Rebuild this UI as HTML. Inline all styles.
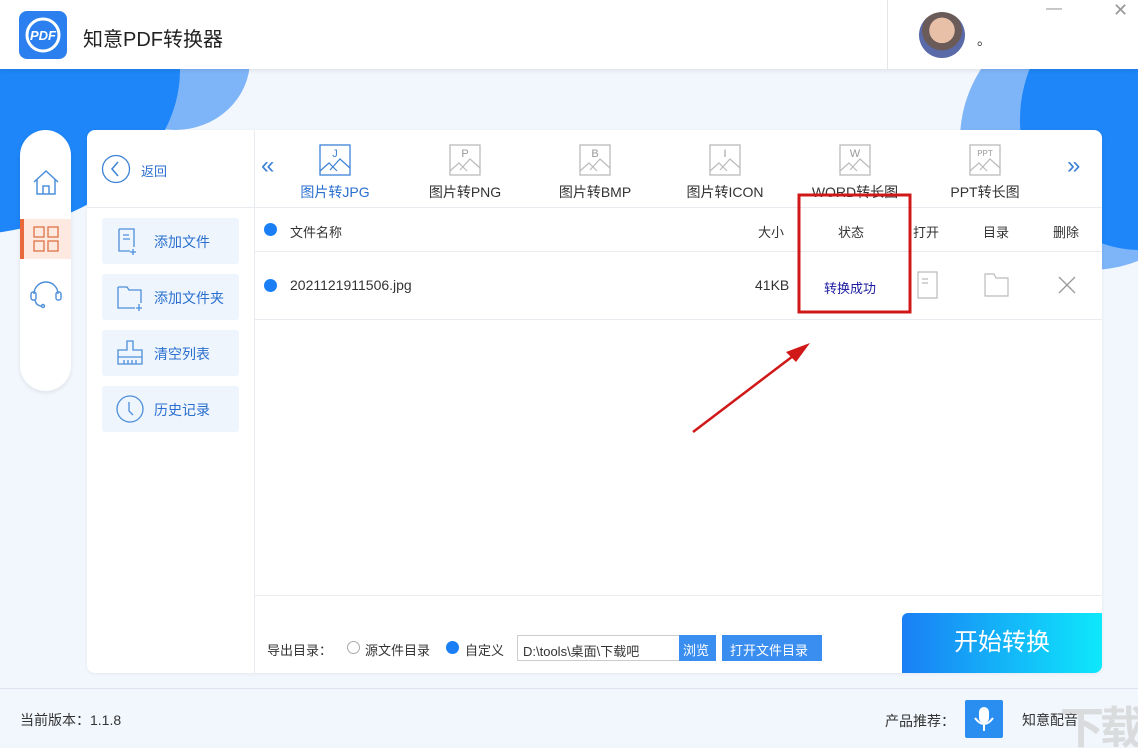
<!DOCTYPE html>
<html><head><meta charset="utf-8"><style>
*{margin:0;padding:0;box-sizing:border-box}
html,body{width:1138px;height:748px;overflow:hidden}
body{background:#f2f7fd;font-family:"Liberation Sans","Noto Sans CJK SC",sans-serif;position:relative;color:#333}
.abs{position:absolute}
.top{left:0;top:0;width:1138px;height:69px;background:#fff;box-shadow:0 2px 4px rgba(0,0,0,.08);z-index:3}
.panel{left:87px;top:130px;width:1015px;height:543px;background:#fff;border-radius:8px;box-shadow:0 1px 4px rgba(0,0,0,.06)}
.side{left:20px;top:130px;width:51px;height:261px;background:#fff;border-radius:26px;box-shadow:0 2px 5px rgba(0,0,0,.08)}
.btn{left:15px;width:137px;height:46px;background:#eef5fd;border-radius:3px;font-size:14px;color:#2a6fcf}
.btn span{position:absolute;left:52px;top:14px}
.btn svg{position:absolute;left:14px;top:9px}
.tab{top:14px;width:120px;text-align:center;font-size:14px;color:#333}
.tab svg{display:block;margin:0 auto 6px}
.hd{font-size:13px;color:#333;top:92px}
.row{font-size:14px;top:147px}
.bg{left:0;top:0;width:1138px;height:300px;overflow:hidden}
.el{position:absolute;border-radius:50%}
</style></head><body>
<div class="abs bg">
 <div class="el" style="left:100px;top:-10px;width:150px;height:140px;background:#7eb5f8"></div>
 <div class="el" style="left:-260px;top:-95px;width:440px;height:330px;background:#1e86f8"></div>
 <div class="el" style="left:960px;top:10px;width:260px;height:260px;background:#7eb5f8"></div>
 <div class="el" style="left:1020px;top:-10px;width:240px;height:260px;background:#1e86f8"></div>
</div>
<div class="abs top">
 <svg class="abs" style="left:19px;top:11px" width="48" height="48"><rect width="48" height="48" rx="8" fill="#2b7fee"/><circle cx="24" cy="24" r="16" fill="none" stroke="#fff" stroke-width="3"/><text x="24" y="29" font-size="13" font-weight="bold" font-style="italic" fill="#fff" text-anchor="middle" font-family="Liberation Sans">PDF</text></svg>
 <div class="abs" style="left:83px;top:23px;font-size:20px;color:#222">知意PDF转换器</div>
 <div class="abs" style="left:887px;top:0;width:1px;height:69px;background:#e5e5e5"></div>
 <div class="abs" style="left:919px;top:12px;width:46px;height:46px;border-radius:50%;background:radial-gradient(circle at 50% 40%,#e8c0a8 0 35%,#6a5a58 36% 55%,#5a6aa8 56%)"></div>
 <div class="abs" style="left:977px;top:30px;font-size:14px">。</div>
 <div class="abs" style="left:1046px;top:0;font-size:16px;color:#999">—</div>
 <div class="abs" style="left:1113px;top:0;font-size:18px;color:#999">✕</div>
</div>
<div class="abs side">
 <svg class="abs" style="left:12px;top:38px" width="28" height="28"><path d="M2 14 L14 3 L26 14 M5 11 V26 H23 V11 M11 26 V18 H17 V26" fill="none" stroke="#4d8fdb" stroke-width="1.5"/></svg>
 <div class="abs" style="left:0;top:89px;width:51px;height:40px;background:#fde9e0;border-left:4px solid #e8693c"></div>
 <svg class="abs" style="left:13px;top:96px" width="26" height="26"><g fill="none" stroke="#e07a50" stroke-width="1.4"><rect x="1" y="1" width="10" height="10"/><rect x="15" y="1" width="10" height="10"/><rect x="1" y="15" width="10" height="10"/><rect x="15" y="15" width="10" height="10"/></g></svg>
 <svg class="abs" style="left:10px;top:148px" width="32" height="32"><g fill="none" stroke="#4d8fdb" stroke-width="1.4"><path d="M4 16 A12 12 0 0 1 28 16"/><rect x="1" y="14" width="5" height="8" rx="2"/><rect x="26" y="14" width="5" height="8" rx="2"/><path d="M5 22 Q6 28 12 28"/><circle cx="13" cy="28" r="1.5"/></g></svg>
</div>
<div class="abs panel">
 <div class="abs" style="left:167px;top:0;width:1px;height:543px;background:#e8ecf0"></div>
 <div class="abs" style="left:0;top:77px;width:1015px;height:1px;background:#e8ecf0"></div>
 <svg class="abs" style="left:14px;top:24px" width="30" height="30"><circle cx="15" cy="15" r="13.5" fill="none" stroke="#3d82d6" stroke-width="1.3"/><path d="M17 8 L11 15 L17 22" fill="none" stroke="#3d82d6" stroke-width="1.5"/></svg>
 <div class="abs" style="left:54px;top:31px;font-size:13px;color:#2a6fcf">返回</div>
 <div class="abs btn" style="top:88px"><svg width="26" height="28"><path d="M3 2 H18 V20 M3 2 V24 H14 M7 8 H13 M7 12 H14 M17 22 V28 M14 25 H20" fill="none" stroke="#4d8fdb" stroke-width="1.3"/></svg><span>添加文件</span></div>
 <div class="abs btn" style="top:144px"><svg width="30" height="28"><path d="M2 4 H11 L13 7 H25 V20 M2 4 V25 H19 M23 21 V28 M20 25 H26" fill="none" stroke="#4d8fdb" stroke-width="1.3"/></svg><span>添加文件夹</span></div>
 <div class="abs btn" style="top:200px"><svg width="30" height="28"><path d="M11 2 H17 V11 H26 V25 H2 V11 H11 Z M2 18 H26 M8 21 V25 M12 21 V25 M16 21 V25 M20 21 V25" fill="none" stroke="#4d8fdb" stroke-width="1.3"/></svg><span>清空列表</span></div>
 <div class="abs btn" style="top:256px"><svg width="30" height="30"><circle cx="14" cy="14" r="13" fill="none" stroke="#4d8fdb" stroke-width="1.3"/><path d="M13 7 V16 L17 20" fill="none" stroke="#4d8fdb" stroke-width="1.3"/></svg><span>历史记录</span></div>
 <div class="abs" style="left:174px;top:22px;font-size:24px;color:#3d82d6">«</div>
 <div class="abs" style="left:980px;top:22px;font-size:24px;color:#3d82d6">»</div>
 <div class="abs tab" style="left:188px;color:#2a6fcf"><svg width="32" height="32"><rect x="1" y="1" width="30" height="30" fill="none" stroke="#3d82d6" stroke-width="1.3"/><path d="M1 27 L10 19 L18 27 M11 26 L21 15 L31 24" fill="none" stroke="#3d82d6" stroke-width="1.2"/><text x="16" y="13" font-size="11" fill="#3d82d6" text-anchor="middle">J</text></svg>图片转JPG</div>
 <div class="abs tab" style="left:318px"><svg width="32" height="32"><rect x="1" y="1" width="30" height="30" fill="none" stroke="#bbb" stroke-width="1.3"/><path d="M1 27 L10 19 L18 27 M11 26 L21 15 L31 24" fill="none" stroke="#bbb" stroke-width="1.2"/><text x="16" y="13" font-size="11" fill="#999" text-anchor="middle">P</text></svg>图片转PNG</div>
 <div class="abs tab" style="left:448px"><svg width="32" height="32"><rect x="1" y="1" width="30" height="30" fill="none" stroke="#bbb" stroke-width="1.3"/><path d="M1 27 L10 19 L18 27 M11 26 L21 15 L31 24" fill="none" stroke="#bbb" stroke-width="1.2"/><text x="16" y="13" font-size="11" fill="#999" text-anchor="middle">B</text></svg>图片转BMP</div>
 <div class="abs tab" style="left:578px"><svg width="32" height="32"><rect x="1" y="1" width="30" height="30" fill="none" stroke="#bbb" stroke-width="1.3"/><path d="M1 27 L10 19 L18 27 M11 26 L21 15 L31 24" fill="none" stroke="#bbb" stroke-width="1.2"/><text x="16" y="13" font-size="11" fill="#999" text-anchor="middle">I</text></svg>图片转ICON</div>
 <div class="abs tab" style="left:708px"><svg width="32" height="32"><rect x="1" y="1" width="30" height="30" fill="none" stroke="#bbb" stroke-width="1.3"/><path d="M1 27 L10 19 L18 27 M11 26 L21 15 L31 24" fill="none" stroke="#bbb" stroke-width="1.2"/><text x="16" y="13" font-size="11" fill="#999" text-anchor="middle">W</text></svg>WORD转长图</div>
 <div class="abs tab" style="left:838px"><svg width="32" height="32"><rect x="1" y="1" width="30" height="30" fill="none" stroke="#bbb" stroke-width="1.3"/><path d="M1 27 L10 19 L18 27 M11 26 L21 15 L31 24" fill="none" stroke="#bbb" stroke-width="1.2"/><text x="16" y="12" font-size="8" fill="#999" text-anchor="middle">PPT</text></svg>PPT转长图</div>
 <div class="abs" style="left:168px;top:121px;width:847px;height:1px;background:#e8ecf0"></div>
 <div class="abs" style="left:168px;top:189px;width:847px;height:1px;background:#e8ecf0"></div>
 <div class="abs" style="left:168px;top:465px;width:847px;height:1px;background:#e8ecf0"></div>
 <div class="abs" style="left:177px;top:93px;width:13px;height:13px;border-radius:50%;background:#1a7ff5"></div>
 <div class="abs hd" style="left:203px">文件名称</div>
 <div class="abs hd" style="left:671px">大小</div>
 <div class="abs hd" style="left:751px">状态</div>
 <div class="abs hd" style="left:826px">打开</div>
 <div class="abs hd" style="left:896px">目录</div>
 <div class="abs hd" style="left:966px">删除</div>
 <div class="abs" style="left:177px;top:149px;width:13px;height:13px;border-radius:50%;background:#1a7ff5"></div>
 <div class="abs row" style="left:203px">2021121911506.jpg</div>
 <div class="abs row" style="left:668px">41KB</div>
 <div class="abs" style="left:737px;top:148px;font-size:13px;color:#1a1aa0">转换成功</div>
 <svg class="abs" style="left:828px;top:141px" width="26" height="30"><path d="M3 1 H22 V27 H3 Z M7 8 H13 M7 12 H13" fill="none" stroke="#bbb" stroke-width="1.2"/></svg>
 <svg class="abs" style="left:896px;top:142px" width="28" height="26"><path d="M2 2 H11 L13 6 H25 V24 H2 Z" fill="none" stroke="#bbb" stroke-width="1.2"/></svg>
 <svg class="abs" style="left:971px;top:146px" width="18" height="18"><path d="M1 1 L17 17 M17 1 L1 17" stroke="#999" stroke-width="1.3"/></svg>
 <div class="abs" style="left:180px;top:510px;font-size:13px">导出目录：</div>
 <div class="abs" style="left:260px;top:511px;width:13px;height:13px;border-radius:50%;border:1px solid #aaa"></div>
 <div class="abs" style="left:278px;top:510px;font-size:13px">源文件目录</div>
 <div class="abs" style="left:359px;top:511px;width:13px;height:13px;border-radius:50%;background:#1a7ff5"></div>
 <div class="abs" style="left:378px;top:510px;font-size:13px">自定义</div>
 <div class="abs" style="left:430px;top:505px;width:163px;height:26px;border:1px solid #ccc;font-size:13px;padding:5px 0 0 5px">D:\tools\桌面\下载吧</div>
 <div class="abs" style="left:592px;top:505px;width:37px;height:26px;background:#3a8ef0;color:#fff;font-size:13px;padding:5px 0 0 4px">浏览</div>
 <div class="abs" style="left:635px;top:505px;width:100px;height:26px;background:#3a8ef0;color:#fff;font-size:13px;padding:5px 0 0 8px">打开文件目录</div>
 <div class="abs" style="left:815px;top:483px;width:200px;height:60px;border-radius:6px 0 8px 0;background:linear-gradient(90deg,#1a7ff5,#0ee8fb);color:#fff;font-size:24px;text-align:center;line-height:60px">开始转换</div>
</div>
<svg class="abs" style="left:0;top:0" width="1138" height="748">
<rect x="799" y="195" width="111" height="117" fill="none" stroke="#d01818" stroke-width="3"/>
<path d="M693 432 L797 353" stroke="#d01818" stroke-width="2.5"/>
<path d="M810 343 L786 352 L796 362Z" fill="#d01818"/>
</svg>
<div class="abs" style="left:0;top:688px;width:1138px;height:1px;background:#dde6f0"></div>
<div class="abs" style="left:20px;top:710px;font-size:14px">当前版本：1.1.8</div>
<div class="abs" style="left:885px;top:711px;font-size:14px">产品推荐：</div>
<div class="abs" style="left:965px;top:700px;width:38px;height:38px;background:#2a8ef0;border-radius:2px"><svg width="38" height="38"><rect x="14" y="7" width="10" height="16" rx="5" fill="#fff"/><path d="M10 18 Q19 30 28 18 M19 25 V31" fill="none" stroke="#fff" stroke-width="2"/></svg></div>
<div class="abs" style="left:1022px;top:710px;font-size:14px">知意配音</div>
<div class="abs" style="left:1060px;top:692px;font-size:44px;color:rgba(200,200,200,.6);font-weight:bold;letter-spacing:-4px;white-space:nowrap">下载吧</div>
</body></html>
